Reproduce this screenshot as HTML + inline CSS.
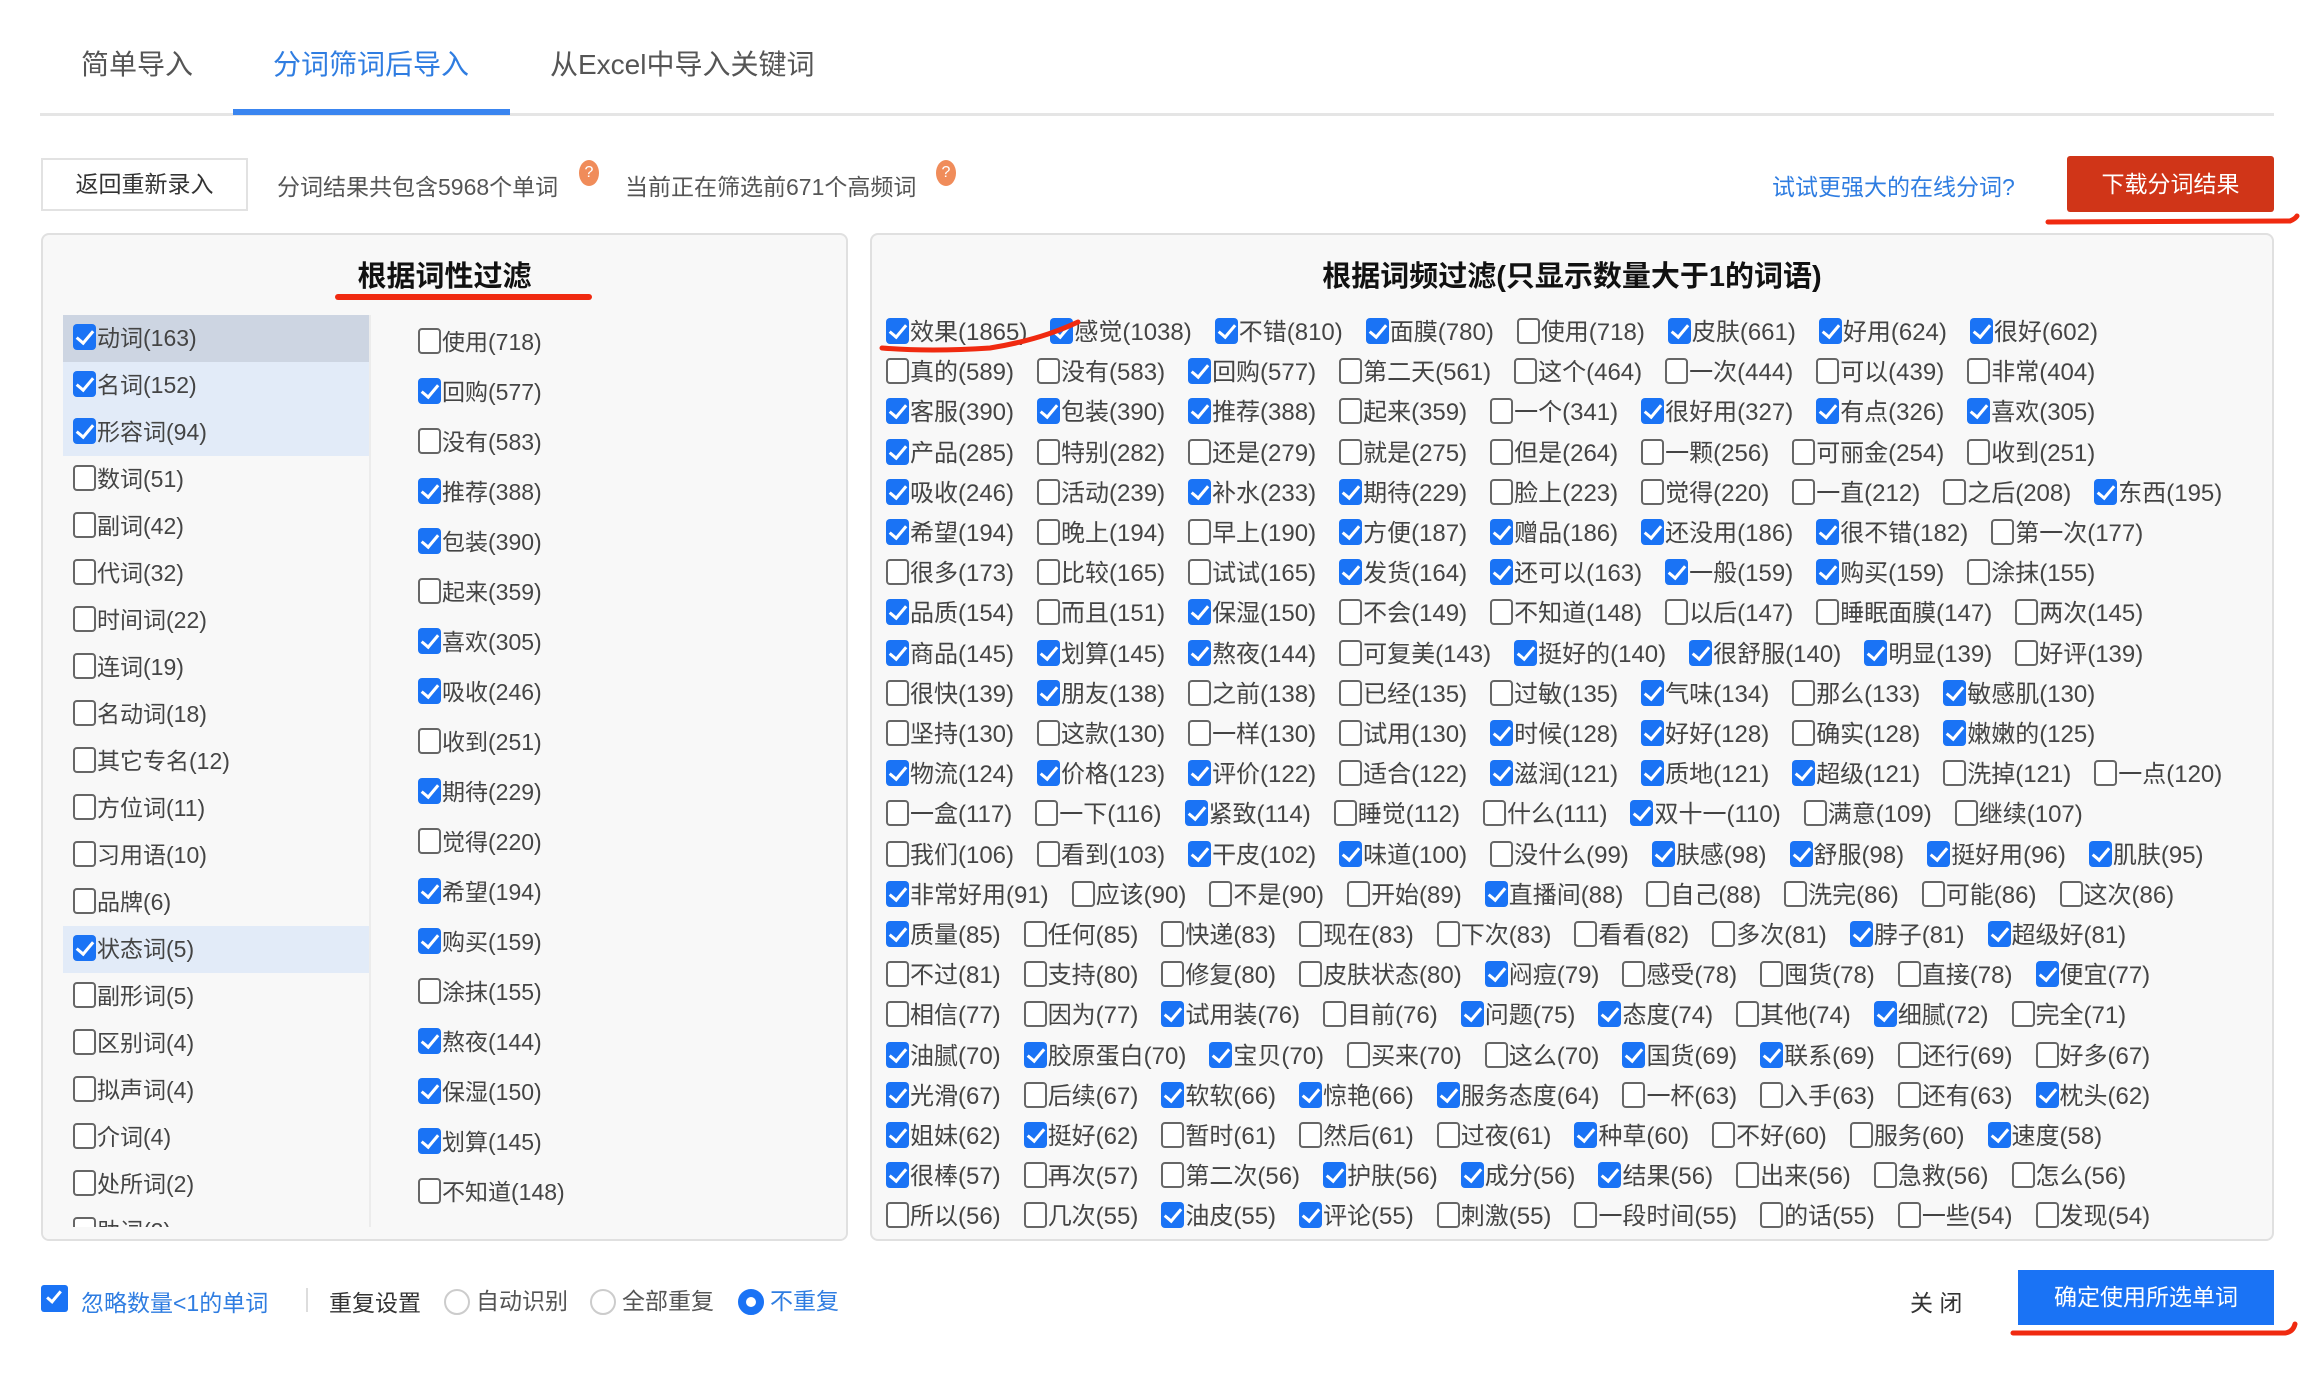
<!DOCTYPE html>
<html><head><meta charset="utf-8"><style>
*{margin:0;padding:0;box-sizing:border-box}
body{width:2300px;height:1376px;background:#fff;position:relative;overflow:hidden;font-family:"Liberation Sans","Noto Sans CJK SC",sans-serif;color:#444}
.a{position:absolute;white-space:nowrap}
.tab{font-size:28px;top:43px;color:#555}
.k,.u{display:inline-block;width:23px;height:26px;border-radius:4px;vertical-align:-4px;margin-right:1px;position:relative}
.k{background:#1a73f5}
.k::after{content:"";position:absolute;left:7px;top:3px;width:7px;height:14px;border:solid #fff;border-width:0 3px 3px 0;transform:rotate(40deg)}
.u{background:#fff;border:2px solid #666}
.panel{position:absolute;background:#f8f8f8;border:2px solid #e0e0e0;border-radius:8px;top:233px;height:1008px;overflow:hidden}
.grid{position:absolute;left:14px;top:78px;font-size:24px;line-height:40.2px;color:#444}
.grid div{white-space:nowrap}
.grid span{margin-right:23px}
.c1{position:absolute;left:20px;top:80px;width:306px;font-size:23px;line-height:47px}
.c1 div{padding-left:10px;height:47px}
.c2{position:absolute;left:375px;top:82px;font-size:23px;line-height:50px}
.radio{display:inline-block;width:26px;height:26px;border-radius:50%;border:2px solid #ccc;background:#fff;vertical-align:-6px;margin-right:6px}
</style></head><body>
<div class="a tab" style="left:81px">简单导入</div>
<div class="a tab" style="left:273px;color:#2f7de1">分词筛词后导入</div>
<div class="a tab" style="left:550px">从Excel中导入关键词</div>
<div class="a" style="left:40px;top:113px;width:2234px;height:3px;background:#e5e5e5"></div>
<div class="a" style="left:233px;top:109px;width:277px;height:6px;background:#3a85f0"></div>

<div class="a" style="left:41px;top:158px;width:207px;height:53px;border:2px solid #e2e2e2;font-size:23px;line-height:49px;text-align:center;color:#333">返回重新录入</div>
<div class="a" style="left:277px;top:168px;font-size:23px;color:#555">分词结果共包含5968个单词</div>
<div class="a" style="left:579px;top:160px;width:20px;height:26px;border-radius:50%;background:#f08c5a;color:#fff;font-size:16px;text-align:center;line-height:26px">?</div>
<div class="a" style="left:625px;top:168px;font-size:23px;color:#555">当前正在筛选前671个高频词</div>
<div class="a" style="left:936px;top:160px;width:20px;height:26px;border-radius:50%;background:#f08c5a;color:#fff;font-size:16px;text-align:center;line-height:26px">?</div>
<div class="a" style="left:1772px;top:168px;font-size:23px;color:#2f7de1">试试更强大的在线分词?</div>
<div class="a" style="left:2067px;top:156px;width:207px;height:56px;background:#d03518;border-radius:3px;color:#fff;font-size:23px;line-height:56px;text-align:center">下载分词结果</div>
<svg class="a" style="left:2040px;top:210px" width="260" height="20"><path d="M8 12 L250 11 Q255 9 257 6" stroke="#f02a10" stroke-width="5" fill="none" stroke-linecap="round"/></svg>

<div class="panel" style="left:41px;width:807px">
<div class="a" style="left:0;width:803px;text-align:center;top:18px;font-size:29px;font-weight:bold;color:#111">根据词性过滤</div>
<div class="a" style="left:292px;top:59px;width:257px;height:6px;background:#f02a10;border-radius:3px"></div>
<div class="a" style="left:326px;top:80px;width:2px;height:930px;background:#ececec"></div>
<div class="c1">
<div style="background:#cdd5e2"><b class="k"></b>动词(163)</div>
<div style="background:#e2ebf8"><b class="k"></b>名词(152)</div>
<div style="background:#e2ebf8"><b class="k"></b>形容词(94)</div>
<div><b class="u"></b>数词(51)</div>
<div><b class="u"></b>副词(42)</div>
<div><b class="u"></b>代词(32)</div>
<div><b class="u"></b>时间词(22)</div>
<div><b class="u"></b>连词(19)</div>
<div><b class="u"></b>名动词(18)</div>
<div><b class="u"></b>其它专名(12)</div>
<div><b class="u"></b>方位词(11)</div>
<div><b class="u"></b>习用语(10)</div>
<div><b class="u"></b>品牌(6)</div>
<div style="background:#e2ebf8"><b class="k"></b>状态词(5)</div>
<div><b class="u"></b>副形词(5)</div>
<div><b class="u"></b>区别词(4)</div>
<div><b class="u"></b>拟声词(4)</div>
<div><b class="u"></b>介词(4)</div>
<div><b class="u"></b>处所词(2)</div>
<div><b class="u"></b>助词(2)</div>
</div>
<div class="c2">
<div><b class="u"></b>使用(718)</div>
<div><b class="k"></b>回购(577)</div>
<div><b class="u"></b>没有(583)</div>
<div><b class="k"></b>推荐(388)</div>
<div><b class="k"></b>包装(390)</div>
<div><b class="u"></b>起来(359)</div>
<div><b class="k"></b>喜欢(305)</div>
<div><b class="k"></b>吸收(246)</div>
<div><b class="u"></b>收到(251)</div>
<div><b class="k"></b>期待(229)</div>
<div><b class="u"></b>觉得(220)</div>
<div><b class="k"></b>希望(194)</div>
<div><b class="k"></b>购买(159)</div>
<div><b class="u"></b>涂抹(155)</div>
<div><b class="k"></b>熬夜(144)</div>
<div><b class="k"></b>保湿(150)</div>
<div><b class="k"></b>划算(145)</div>
<div><b class="u"></b>不知道(148)</div>
</div>
<div class="a" style="left:0;top:992px;width:803px;height:14px;background:#f8f8f8"></div>
</div>

<div class="panel" style="left:870px;width:1404px">
<div class="a" style="left:0;width:1400px;text-align:center;top:18px;font-size:29px;font-weight:bold;color:#111">根据词频过滤(只显示数量大于1的词语)</div>
<div class="grid">
<div><span><b class="k"></b>效果(1865)</span><span><b class="k"></b>感觉(1038)</span><span><b class="k"></b>不错(810)</span><span><b class="k"></b>面膜(780)</span><span><b class="u"></b>使用(718)</span><span><b class="k"></b>皮肤(661)</span><span><b class="k"></b>好用(624)</span><span><b class="k"></b>很好(602)</span></div>
<div><span><b class="u"></b>真的(589)</span><span><b class="u"></b>没有(583)</span><span><b class="k"></b>回购(577)</span><span><b class="u"></b>第二天(561)</span><span><b class="u"></b>这个(464)</span><span><b class="u"></b>一次(444)</span><span><b class="u"></b>可以(439)</span><span><b class="u"></b>非常(404)</span></div>
<div><span><b class="k"></b>客服(390)</span><span><b class="k"></b>包装(390)</span><span><b class="k"></b>推荐(388)</span><span><b class="u"></b>起来(359)</span><span><b class="u"></b>一个(341)</span><span><b class="k"></b>很好用(327)</span><span><b class="k"></b>有点(326)</span><span><b class="k"></b>喜欢(305)</span></div>
<div><span><b class="k"></b>产品(285)</span><span><b class="u"></b>特别(282)</span><span><b class="u"></b>还是(279)</span><span><b class="u"></b>就是(275)</span><span><b class="u"></b>但是(264)</span><span><b class="u"></b>一颗(256)</span><span><b class="u"></b>可丽金(254)</span><span><b class="u"></b>收到(251)</span></div>
<div><span><b class="k"></b>吸收(246)</span><span><b class="u"></b>活动(239)</span><span><b class="k"></b>补水(233)</span><span><b class="k"></b>期待(229)</span><span><b class="u"></b>脸上(223)</span><span><b class="u"></b>觉得(220)</span><span><b class="u"></b>一直(212)</span><span><b class="u"></b>之后(208)</span><span><b class="k"></b>东西(195)</span></div>
<div><span><b class="k"></b>希望(194)</span><span><b class="u"></b>晚上(194)</span><span><b class="u"></b>早上(190)</span><span><b class="k"></b>方便(187)</span><span><b class="k"></b>赠品(186)</span><span><b class="k"></b>还没用(186)</span><span><b class="k"></b>很不错(182)</span><span><b class="u"></b>第一次(177)</span></div>
<div><span><b class="u"></b>很多(173)</span><span><b class="u"></b>比较(165)</span><span><b class="u"></b>试试(165)</span><span><b class="k"></b>发货(164)</span><span><b class="k"></b>还可以(163)</span><span><b class="k"></b>一般(159)</span><span><b class="k"></b>购买(159)</span><span><b class="u"></b>涂抹(155)</span></div>
<div><span><b class="k"></b>品质(154)</span><span><b class="u"></b>而且(151)</span><span><b class="k"></b>保湿(150)</span><span><b class="u"></b>不会(149)</span><span><b class="u"></b>不知道(148)</span><span><b class="u"></b>以后(147)</span><span><b class="u"></b>睡眠面膜(147)</span><span><b class="u"></b>两次(145)</span></div>
<div><span><b class="k"></b>商品(145)</span><span><b class="k"></b>划算(145)</span><span><b class="k"></b>熬夜(144)</span><span><b class="u"></b>可复美(143)</span><span><b class="k"></b>挺好的(140)</span><span><b class="k"></b>很舒服(140)</span><span><b class="k"></b>明显(139)</span><span><b class="u"></b>好评(139)</span></div>
<div><span><b class="u"></b>很快(139)</span><span><b class="k"></b>朋友(138)</span><span><b class="u"></b>之前(138)</span><span><b class="u"></b>已经(135)</span><span><b class="u"></b>过敏(135)</span><span><b class="k"></b>气味(134)</span><span><b class="u"></b>那么(133)</span><span><b class="k"></b>敏感肌(130)</span></div>
<div><span><b class="u"></b>坚持(130)</span><span><b class="u"></b>这款(130)</span><span><b class="u"></b>一样(130)</span><span><b class="u"></b>试用(130)</span><span><b class="k"></b>时候(128)</span><span><b class="k"></b>好好(128)</span><span><b class="u"></b>确实(128)</span><span><b class="k"></b>嫩嫩的(125)</span></div>
<div><span><b class="k"></b>物流(124)</span><span><b class="k"></b>价格(123)</span><span><b class="k"></b>评价(122)</span><span><b class="u"></b>适合(122)</span><span><b class="k"></b>滋润(121)</span><span><b class="k"></b>质地(121)</span><span><b class="k"></b>超级(121)</span><span><b class="u"></b>洗掉(121)</span><span><b class="u"></b>一点(120)</span></div>
<div><span><b class="u"></b>一盒(117)</span><span><b class="u"></b>一下(116)</span><span><b class="k"></b>紧致(114)</span><span><b class="u"></b>睡觉(112)</span><span><b class="u"></b>什么(111)</span><span><b class="k"></b>双十一(110)</span><span><b class="u"></b>满意(109)</span><span><b class="u"></b>继续(107)</span></div>
<div><span><b class="u"></b>我们(106)</span><span><b class="u"></b>看到(103)</span><span><b class="k"></b>干皮(102)</span><span><b class="k"></b>味道(100)</span><span><b class="u"></b>没什么(99)</span><span><b class="k"></b>肤感(98)</span><span><b class="k"></b>舒服(98)</span><span><b class="k"></b>挺好用(96)</span><span><b class="k"></b>肌肤(95)</span></div>
<div><span><b class="k"></b>非常好用(91)</span><span><b class="u"></b>应该(90)</span><span><b class="u"></b>不是(90)</span><span><b class="u"></b>开始(89)</span><span><b class="k"></b>直播间(88)</span><span><b class="u"></b>自己(88)</span><span><b class="u"></b>洗完(86)</span><span><b class="u"></b>可能(86)</span><span><b class="u"></b>这次(86)</span></div>
<div><span><b class="k"></b>质量(85)</span><span><b class="u"></b>任何(85)</span><span><b class="u"></b>快递(83)</span><span><b class="u"></b>现在(83)</span><span><b class="u"></b>下次(83)</span><span><b class="u"></b>看看(82)</span><span><b class="u"></b>多次(81)</span><span><b class="k"></b>脖子(81)</span><span><b class="k"></b>超级好(81)</span></div>
<div><span><b class="u"></b>不过(81)</span><span><b class="u"></b>支持(80)</span><span><b class="u"></b>修复(80)</span><span><b class="u"></b>皮肤状态(80)</span><span><b class="k"></b>闷痘(79)</span><span><b class="u"></b>感受(78)</span><span><b class="u"></b>囤货(78)</span><span><b class="u"></b>直接(78)</span><span><b class="k"></b>便宜(77)</span></div>
<div><span><b class="u"></b>相信(77)</span><span><b class="u"></b>因为(77)</span><span><b class="k"></b>试用装(76)</span><span><b class="u"></b>目前(76)</span><span><b class="k"></b>问题(75)</span><span><b class="k"></b>态度(74)</span><span><b class="u"></b>其他(74)</span><span><b class="k"></b>细腻(72)</span><span><b class="u"></b>完全(71)</span></div>
<div><span><b class="k"></b>油腻(70)</span><span><b class="k"></b>胶原蛋白(70)</span><span><b class="k"></b>宝贝(70)</span><span><b class="u"></b>买来(70)</span><span><b class="u"></b>这么(70)</span><span><b class="k"></b>国货(69)</span><span><b class="k"></b>联系(69)</span><span><b class="u"></b>还行(69)</span><span><b class="u"></b>好多(67)</span></div>
<div><span><b class="k"></b>光滑(67)</span><span><b class="u"></b>后续(67)</span><span><b class="k"></b>软软(66)</span><span><b class="k"></b>惊艳(66)</span><span><b class="k"></b>服务态度(64)</span><span><b class="u"></b>一杯(63)</span><span><b class="u"></b>入手(63)</span><span><b class="u"></b>还有(63)</span><span><b class="k"></b>枕头(62)</span></div>
<div><span><b class="k"></b>姐妹(62)</span><span><b class="k"></b>挺好(62)</span><span><b class="u"></b>暂时(61)</span><span><b class="u"></b>然后(61)</span><span><b class="u"></b>过夜(61)</span><span><b class="k"></b>种草(60)</span><span><b class="u"></b>不好(60)</span><span><b class="u"></b>服务(60)</span><span><b class="k"></b>速度(58)</span></div>
<div><span><b class="k"></b>很棒(57)</span><span><b class="u"></b>再次(57)</span><span><b class="u"></b>第二次(56)</span><span><b class="k"></b>护肤(56)</span><span><b class="k"></b>成分(56)</span><span><b class="k"></b>结果(56)</span><span><b class="u"></b>出来(56)</span><span><b class="u"></b>急救(56)</span><span><b class="u"></b>怎么(56)</span></div>
<div><span><b class="u"></b>所以(56)</span><span><b class="u"></b>几次(55)</span><span><b class="k"></b>油皮(55)</span><span><b class="k"></b>评论(55)</span><span><b class="u"></b>刺激(55)</span><span><b class="u"></b>一段时间(55)</span><span><b class="u"></b>的话(55)</span><span><b class="u"></b>一些(54)</span><span><b class="u"></b>发现(54)</span></div>
</div>
</div>
<svg class="a" style="left:870px;top:308px" width="230" height="50"><path d="M12 40 Q60 44 120 40 Q170 32 208 14" stroke="#f02a10" stroke-width="5" fill="none" stroke-linecap="round"/></svg>

<div class="a" style="left:41px;top:1285px;width:27px;height:27px;background:#1a73f5;border-radius:3px"></div>
<div class="a" style="left:50px;top:1288px;width:8px;height:15px;border:solid #fff;border-width:0 3px 3px 0;transform:rotate(40deg)"></div>
<div class="a" style="left:81px;top:1284px;font-size:23px;color:#2f7de1">忽略数量&lt;1的单词</div>
<div class="a" style="left:306px;top:1288px;width:2px;height:24px;background:#ddd"></div>
<div class="a" style="left:329px;top:1284px;font-size:23px;color:#333">重复设置</div>
<div class="a" style="left:444px;top:1282px;font-size:23px;color:#555"><span class="radio"></span>自动识别</div>
<div class="a" style="left:590px;top:1282px;font-size:23px;color:#555"><span class="radio"></span>全部重复</div>
<div class="a" style="left:738px;top:1282px;font-size:23px;color:#2f7de1"><span class="radio" style="border:8px solid #1a73f5"></span>不重复</div>
<div class="a" style="left:1910px;top:1284px;font-size:23px;color:#333">关 闭</div>
<div class="a" style="left:2018px;top:1270px;width:256px;height:55px;background:#1a73f5;color:#fff;font-size:23px;line-height:55px;text-align:center">确定使用所选单词</div>
<svg class="a" style="left:2005px;top:1320px" width="295" height="22"><path d="M8 13 L280 13 Q288 12 290 4" stroke="#f02a10" stroke-width="5" fill="none" stroke-linecap="round"/></svg>
</body></html>
